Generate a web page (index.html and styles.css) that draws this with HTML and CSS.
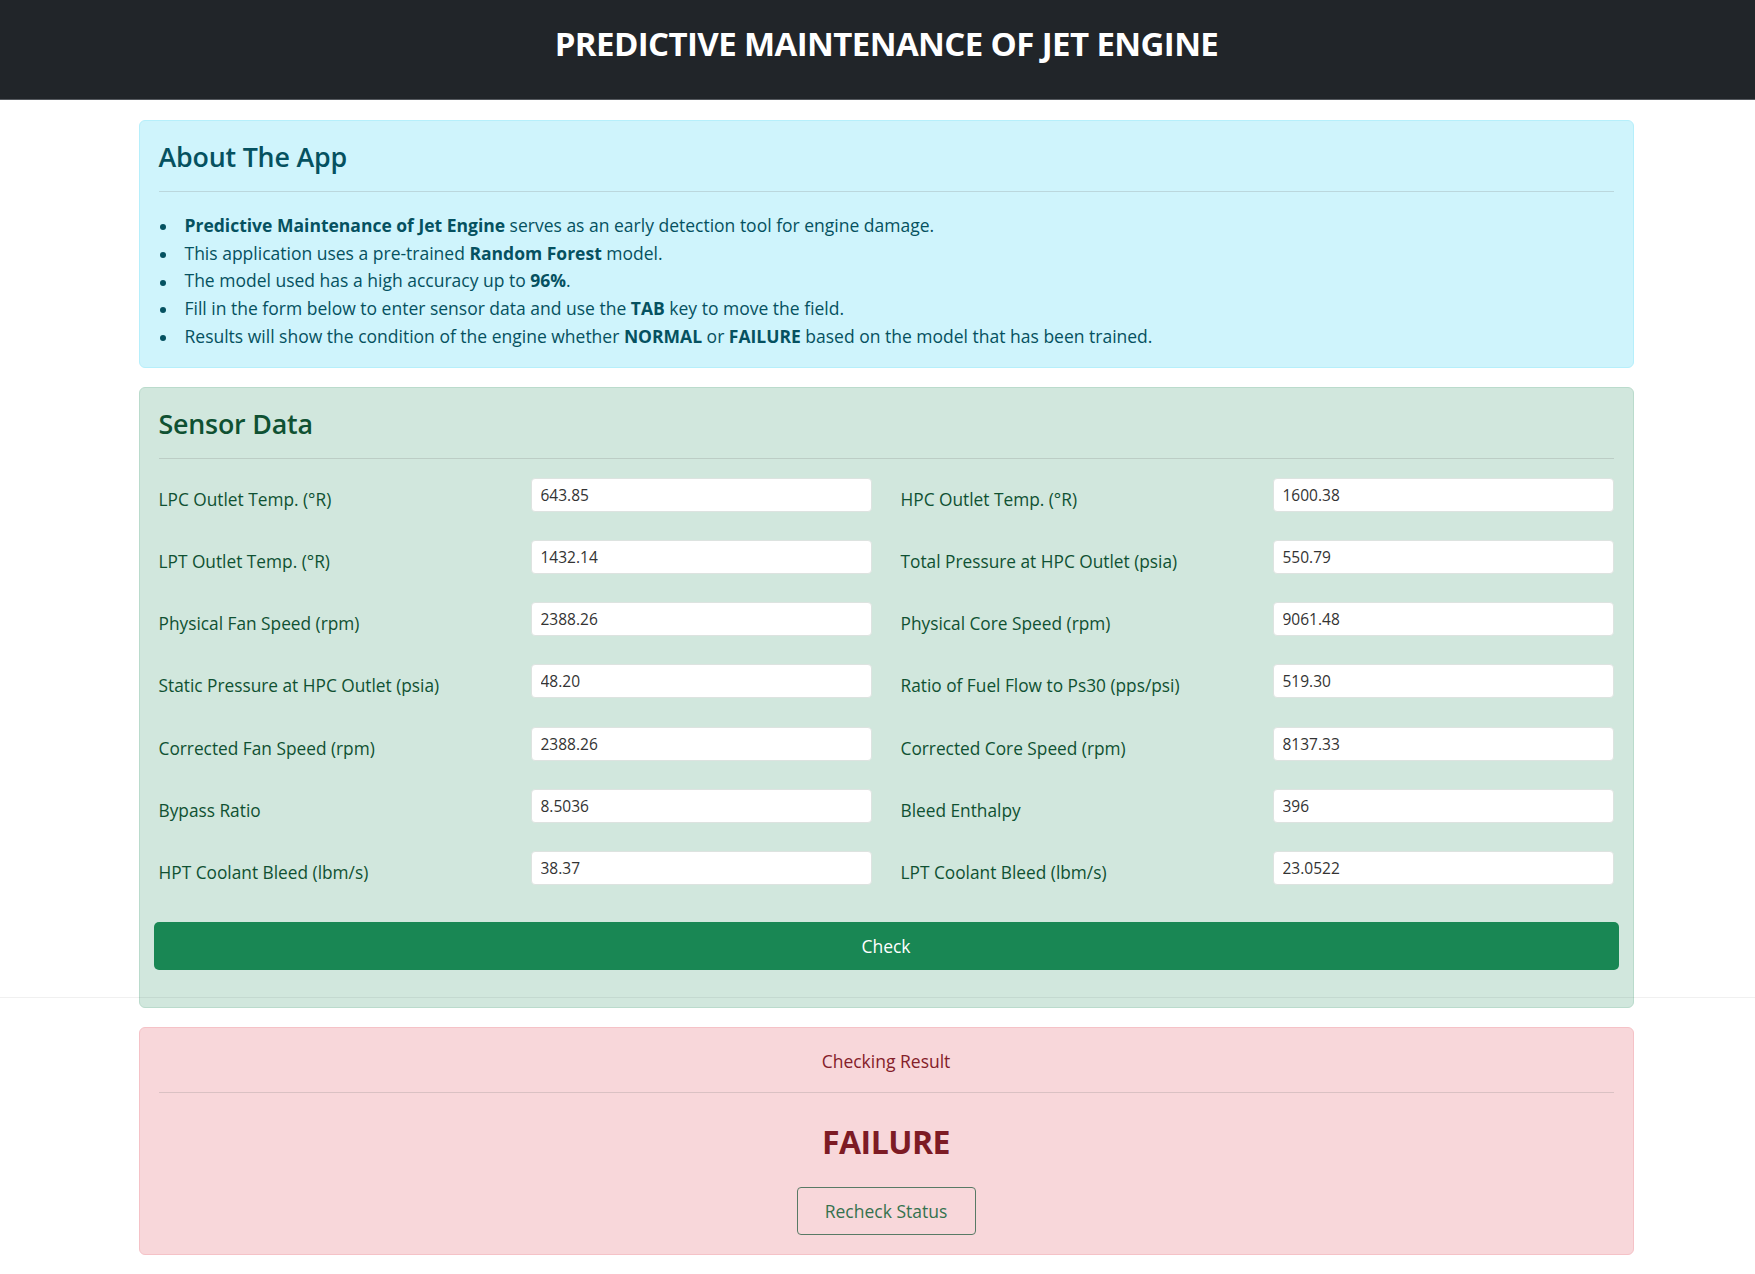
FILE: index.html
```html
<!DOCTYPE html>
<html lang="en">
<head>
<meta charset="utf-8">
<title>Predictive Maintenance of Jet Engine</title>
<link rel="stylesheet" href="styles.css">
</head>
<body>
<header class="topbar">
  <h1 class="topbar-title">PREDICTIVE MAINTENANCE OF JET ENGINE</h1>
</header>
<main class="page">
  <div class="container">
    <section class="panel panel-info">
      <h2 class="panel-title">About The App</h2>
      <hr class="panel-rule">
      <ul class="about-list">
        <li><b>Predictive Maintenance of Jet Engine</b> serves as an early detection tool for engine damage.</li>
        <li>This application uses a pre-trained <b>Random Forest</b> model.</li>
        <li>The model used has a high accuracy up to <b>96%</b>.</li>
        <li>Fill in the form below to enter sensor data and use the <b>TAB</b> key to move the field.</li>
        <li>Results will show the condition of the engine whether <b>NORMAL</b> or <b>FAILURE</b> based on the model that has been trained.</li>
      </ul>
    </section>

    <section class="panel panel-success">
      <h2 class="panel-title">Sensor Data</h2>
      <hr class="panel-rule">
      <form class="sensor-form">
        <div class="fields">
          <div class="field"><label class="field-label">LPC Outlet Temp. (°R)</label><input class="field-input" value="643.85"></div>
          <div class="field"><label class="field-label">HPC Outlet Temp. (°R)</label><input class="field-input" value="1600.38"></div>
          <div class="field"><label class="field-label">LPT Outlet Temp. (°R)</label><input class="field-input" value="1432.14"></div>
          <div class="field"><label class="field-label">Total Pressure at HPC Outlet (psia)</label><input class="field-input" value="550.79"></div>
          <div class="field"><label class="field-label">Physical Fan Speed (rpm)</label><input class="field-input" value="2388.26"></div>
          <div class="field"><label class="field-label">Physical Core Speed (rpm)</label><input class="field-input" value="9061.48"></div>
          <div class="field"><label class="field-label">Static Pressure at HPC Outlet (psia)</label><input class="field-input" value="48.20"></div>
          <div class="field"><label class="field-label">Ratio of Fuel Flow to Ps30 (pps/psi)</label><input class="field-input" value="519.30"></div>
          <div class="field"><label class="field-label">Corrected Fan Speed (rpm)</label><input class="field-input" value="2388.26"></div>
          <div class="field"><label class="field-label">Corrected Core Speed (rpm)</label><input class="field-input" value="8137.33"></div>
          <div class="field"><label class="field-label">Bypass Ratio</label><input class="field-input" value="8.5036"></div>
          <div class="field"><label class="field-label">Bleed Enthalpy</label><input class="field-input" value="396"></div>
          <div class="field"><label class="field-label">HPT Coolant Bleed (lbm/s)</label><input class="field-input" value="38.37"></div>
          <div class="field"><label class="field-label">LPT Coolant Bleed (lbm/s)</label><input class="field-input" value="23.0522"></div>
        </div>
        <button type="button" class="btn-check">Check</button>
      </form>
    </section>

    <section class="panel panel-danger result">
      <div class="result-caption">Checking Result</div>
      <hr class="panel-rule">
      <div class="result-status">FAILURE</div>
      <button type="button" class="btn-recheck">Recheck Status</button>
    </section>
  </div>
  <div class="fold-line"></div>
</main>
</body>
</html>
```

FILE: styles.css
```css
* { box-sizing: border-box; }

html, body {
  margin: 0;
  padding: 0;
  background: #ffffff;
}

body {
  font-family: "Open Sans", "Noto Sans", "Liberation Sans", sans-serif;
  font-size: 17.5px;
  line-height: 27.7px;
  color: #212529;
  position: relative;
}

.topbar {
  background: #212529;
  border-bottom: 1px solid #55595e;
  padding: 23px 0 34px 18px;
  text-align: center;
}

.topbar-title {
  margin: 0;
  color: #ffffff;
  font-size: 33px;
  line-height: 42px;
  font-weight: 700;
  letter-spacing: -0.6px;
}

.page {
  padding: 20px 0 19px 17px;
}

.container {
  width: 1495px;
  margin: 0 auto;
  display: flex;
  flex-direction: column;
  gap: 19px;
}

.panel {
  border: 1px solid transparent;
  border-radius: 6px;
  padding: 19px 19px 16px;
}

.panel-info {
  background: #cff4fc;
  border-color: #b6effb;
  color: #055160;
}

.panel-success {
  background: #d1e7dd;
  border-color: #badbcc;
  color: #0f5132;
  padding-bottom: 37px;
}

.panel-danger {
  background: #f8d7da;
  border-color: #f5c2c7;
  color: #842029;
}

.panel-title {
  margin: 0;
  font-size: 26.8px;
  line-height: 34px;
  font-weight: 600;
  letter-spacing: -0.2px;
}

.panel-rule {
  margin: 17px 0 0;
  border: 0;
  border-top: 1px solid currentColor;
  opacity: 0.25;
}

.about-list {
  margin: 20px 0 0;
  padding-left: 26px;
  list-style: none;
}

.about-list li::before {
  content: "";
  display: inline-block;
  width: 6px;
  height: 6px;
  border-radius: 50%;
  background: currentColor;
  margin-left: -24.5px;
  margin-right: 18.5px;
  vertical-align: middle;
}

.about-list b {
  font-weight: 700;
}

.sensor-form {
  margin-top: 20px;
}

.fields {
  display: grid;
  grid-template-columns: 1fr 1fr;
  column-gap: 29px;
  row-gap: 27.3px;
}

.field {
  display: grid;
  grid-template-columns: 1fr 341px;
  align-items: start;
}

.field-label {
  padding-top: 7px;
  line-height: 28px;
  font-size: 17.3px;
  color: #0f5132;
}

.field-input {
  height: 34px;
  width: 341px;
  margin-top: -1px;
  border: 1px solid #dde3e0;
  border-radius: 4px;
  background: #ffffff;
  padding: 0 9px;
  font-family: "Open Sans", "Noto Sans", sans-serif;
  font-size: 15.5px;
  color: #333;
}

.btn-check {
  display: block;
  width: calc(100% + 10px);
  margin: 35px -5px 0;
  height: 48px;
  border: 0;
  border-radius: 5px;
  background: #198754;
  color: #ffffff;
  font-family: inherit;
  font-size: 17.5px;
}

.result {
  text-align: center;
  padding: 19px 19px 19px;
}

.result-caption {
  line-height: 28px;
}

.result-status {
  margin-top: 30px;
  font-size: 32px;
  line-height: 38px;
  font-weight: 700;
  color: #7d1b24;
  letter-spacing: -0.5px;
}

.btn-recheck {
  margin-top: 26px;
  width: 179px;
  height: 48px;
  background: transparent;
  border: 1px solid #587a65;
  border-radius: 4px;
  color: #35724e;
  font-family: inherit;
  font-size: 17.5px;
}

.fold-line {
  position: absolute;
  left: 0;
  right: 0;
  top: 997px;
  height: 1px;
  background: rgba(0, 0, 0, 0.06);
  pointer-events: none;
}
```
